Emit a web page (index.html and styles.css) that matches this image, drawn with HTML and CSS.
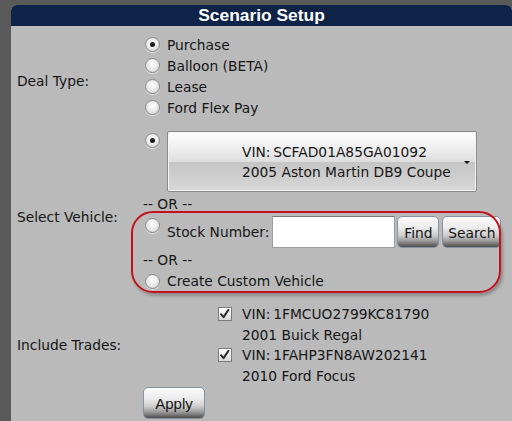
FILE: index.html
```html
<!DOCTYPE html>
<html>
<head>
<meta charset="utf-8">
<link rel="stylesheet" href="styles.css">
</head>
<body>
<div class="panel">
  <div class="header">Scenario Setup</div>
  <div class="form">
    <div class="label l-deal">Deal Type:</div>
    <div class="cell deal">
      <div class="opt"><span class="radio checked"></span>Purchase</div>
      <div class="opt"><span class="radio"></span>Balloon (BETA)</div>
      <div class="opt"><span class="radio"></span>Lease</div>
      <div class="opt"><span class="radio"></span>Ford Flex Pay</div>
    </div>

    <div class="label l-vehicle">Select Vehicle:</div>
    <div class="cell vehicle">
      <div class="veh-line">
        <span class="radio checked top"></span>
        <div class="select">
          <div class="sel-text">
            <div>VIN:&#8201;SCFAD01A85GA01092</div>
            <div>2005 Aston Martin DB9 Coupe</div>
          </div>
          <span class="arrow"></span>
        </div>
      </div>
      <div class="or first-or">-- OR --</div>
      <div class="stock-line">
        <span class="radio stock-radio"></span>
        <span class="stock-label">Stock Number:</span>
        <span class="input"></span>
        <span class="btn find">Find</span>
        <span class="btn search">Search</span>
      </div>
      <div class="or">-- OR --</div>
      <div class="opt custom"><span class="radio"></span>Create Custom Vehicle</div>
      <div class="annot"></div>
    </div>

    <div class="label l-trades">Include Trades:</div>
    <div class="cell trades">
      <div class="trade"><span class="check"><svg viewBox="0 0 14 14" width="14" height="14"><path d="M3.2 7.2 L6 10.4 L11.2 2.6" fill="none" stroke="#2b2b2b" stroke-width="2.1" stroke-linecap="round" stroke-linejoin="round"/></svg></span><span>VIN:&#8201;1FMCUO2799KC81790</span></div>
      <div class="trade-sub">2001 Buick Regal</div>
      <div class="trade"><span class="check"><svg viewBox="0 0 14 14" width="14" height="14"><path d="M3.2 7.2 L6 10.4 L11.2 2.6" fill="none" stroke="#2b2b2b" stroke-width="2.1" stroke-linecap="round" stroke-linejoin="round"/></svg></span><span>VIN:&#8201;1FAHP3FN8AW202141</span></div>
      <div class="trade-sub">2010 Ford Focus</div>
    </div>

    <div class="label"></div>
    <div class="cell apply-cell">
      <span class="btn apply">Apply</span>
    </div>
  </div>
</div>
</body>
</html>
```

FILE: styles.css
```css
html, body {
  margin: 0;
  padding: 0;
}
body {
  background: #595959;
  width: 512px;
  height: 421px;
  overflow: hidden;
  font-family: "DejaVu Sans", Verdana, sans-serif;
  font-size: 13.8px;
  color: #161616;
}
.panel {
  margin: 5px 0 0 11px;
  background: #bababa;
  border-radius: 6px 6px 0 0;
  height: 416px;
  overflow: hidden;
}
.header {
  height: 21px;
  line-height: 21px;
  background: #0f2349;
  color: #fff;
  text-align: center;
  font-family: "Liberation Sans", Arial, sans-serif;
  font-weight: bold;
  font-size: 17.4px;
}
.form {
  display: grid;
  grid-template-columns: 132px 1fr;
  padding-top: 8px;
}
.label {
  padding-left: 6px;
  line-height: 20px;
  align-self: start;
}
.l-deal { padding-top: 37px; }
.l-vehicle { padding-top: 76px; }
.l-trades { padding-top: 44px; }

.cell { position: relative; }
.deal { padding-bottom: 13px; }
.opt {
  display: flex;
  align-items: center;
  height: 21px;
}
.radio {
  display: inline-block;
  box-sizing: border-box;
  width: 15px;
  height: 15px;
  margin: 0 7px 0 2px;
  border-radius: 50%;
  border: 1px solid #8b8b8b;
  background: radial-gradient(circle at 50% 40%, #ffffff 0%, #f2f2f2 35%, #cdcdcd 100%);
  box-shadow: 0 1px 1px rgba(255,255,255,0.6);
  position: relative;
  flex: none;
}
.radio.checked::after {
  content: "";
  position: absolute;
  left: 50%;
  top: 50%;
  width: 5px;
  height: 5px;
  margin: -2.5px 0 0 -2.5px;
  border-radius: 50%;
  background: #1e1e1e;
}
.veh-line {
  display: flex;
  align-items: flex-start;
}
.radio.top { margin-top: 2px; }
.select {
  box-sizing: border-box;
  width: 310px;
  height: 61px;
  border: 1px solid #8a8a8a;
  border-radius: 2px;
  box-shadow: inset 0 0 0 1px #f4f4f4;
  background: linear-gradient(#fefefe 0%, #ececec 30%, #dedede 50%, #c5c5c5 51%, #cdcdcd 75%, #d9d9d9 100%);
  position: relative;
}
.sel-text {
  padding: 10px 0 0 74px;
  line-height: 20px;
}
.arrow {
  position: absolute;
  right: 6px;
  top: 29px;
  width: 0;
  height: 0;
  border-left: 3px solid transparent;
  border-right: 3px solid transparent;
  border-top: 3px solid #111;
}
.or {
  line-height: 20px;
  height: 20px;
}
.first-or { margin-top: 2px; }
.stock-line {
  display: flex;
  align-items: center;
  height: 32px;
  margin: 2px 0;
}
.stock-radio {
  align-self: flex-start;
  margin-top: 2px;
}
.stock-label { margin-right: 3px; white-space: nowrap; }
.input {
  box-sizing: border-box;
  width: 123px;
  height: 32px;
  background: #fff;
  border: 1px solid #9c9c9c;
  border-top-color: #7a7a7a;
  margin-right: 2px;
  flex: none;
}
.btn {
  box-sizing: border-box;
  display: inline-flex;
  align-items: center;
  justify-content: center;
  height: 32px;
  border: 1px solid #8593a0;
  border-radius: 5px;
  background: linear-gradient(#fbfbfb 0%, #ececec 35%, #cfcfcf 60%, #9a9a9a 80%, #4e4e4e 100%);
  color: #141414;
  padding-top: 1px;
  flex: none;
}
.find { width: 42px; margin-right: 3px; }
.search { width: 59px; }
.custom { height: 20px; margin-top: 1px; }
.annot {
  position: absolute;
  left: -12px;
  top: 80px;
  width: 370px;
  height: 82px;
  box-sizing: border-box;
  border: 2px solid #c3121c;
  border-radius: 22px;
  box-shadow: 2px 3px 3px rgba(60,60,60,0.35);
  pointer-events: none;
}
.trades {
  padding: 13px 0 0 75px;
  line-height: 20.5px;
}
.trade {
  display: flex;
  align-items: center;
  height: 20.5px;
}
.check {
  box-sizing: border-box;
  width: 14px;
  height: 14px;
  border: 1px solid #7c7c7c;
  background: linear-gradient(#ffffff, #d8d8d8);
  margin-right: 10px;
  display: inline-flex;
  flex: none;
}
.check svg { margin: -1px 0 0 -1px; }
.trade-sub {
  padding-left: 24px;
  height: 20.5px;
}
.apply-cell { padding-top: 1px; }
.apply {
  width: 62px;
  font-family: "Liberation Sans", Arial, sans-serif;
  font-size: 15px;
}
```
